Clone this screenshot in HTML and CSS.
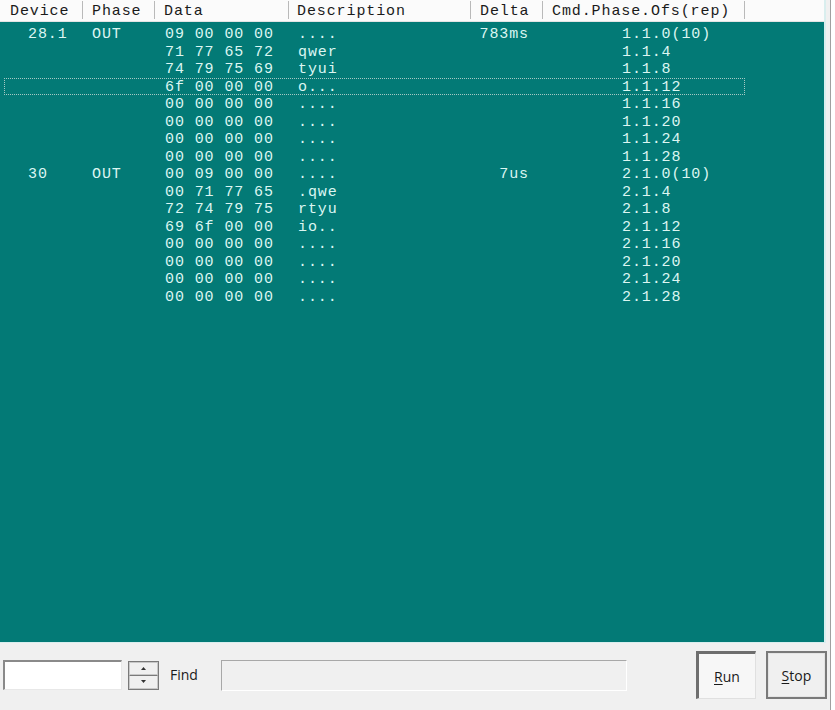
FILE: index.html
```html
<!DOCTYPE html>
<html>
<head>
<meta charset="utf-8">
<link rel="stylesheet" href="styles.css">
</head>
<body>
<div class="window">
  <div class="list">
    <div class="header">
      <div class="hcell c-dev">Device</div>
      <div class="hcell c-ph">Phase</div>
      <div class="hcell c-data">Data</div>
      <div class="hcell c-desc">Description</div>
      <div class="hcell c-delta">Delta</div>
      <div class="hcell c-cmd">Cmd.Phase.Ofs(rep)</div>
      <div class="hcell c-rest"></div>
    </div>
    <div class="rows">
      <div class="row"><span class="dev">28.1</span><span class="ph">OUT</span><span class="data">09 00 00 00</span><span class="desc">....</span><span class="delta">783ms</span><span class="cmd">1.1.0(10)</span></div>
      <div class="row"><span class="dev"></span><span class="ph"></span><span class="data">71 77 65 72</span><span class="desc">qwer</span><span class="delta"></span><span class="cmd">1.1.4</span></div>
      <div class="row"><span class="dev"></span><span class="ph"></span><span class="data">74 79 75 69</span><span class="desc">tyui</span><span class="delta"></span><span class="cmd">1.1.8</span></div>
      <div class="row focus"><span class="dev"></span><span class="ph"></span><span class="data">6f 00 00 00</span><span class="desc">o...</span><span class="delta"></span><span class="cmd">1.1.12</span></div>
      <div class="row"><span class="dev"></span><span class="ph"></span><span class="data">00 00 00 00</span><span class="desc">....</span><span class="delta"></span><span class="cmd">1.1.16</span></div>
      <div class="row"><span class="dev"></span><span class="ph"></span><span class="data">00 00 00 00</span><span class="desc">....</span><span class="delta"></span><span class="cmd">1.1.20</span></div>
      <div class="row"><span class="dev"></span><span class="ph"></span><span class="data">00 00 00 00</span><span class="desc">....</span><span class="delta"></span><span class="cmd">1.1.24</span></div>
      <div class="row"><span class="dev"></span><span class="ph"></span><span class="data">00 00 00 00</span><span class="desc">....</span><span class="delta"></span><span class="cmd">1.1.28</span></div>
      <div class="row"><span class="dev">30</span><span class="ph">OUT</span><span class="data">00 09 00 00</span><span class="desc">....</span><span class="delta">7us</span><span class="cmd">2.1.0(10)</span></div>
      <div class="row"><span class="dev"></span><span class="ph"></span><span class="data">00 71 77 65</span><span class="desc">.qwe</span><span class="delta"></span><span class="cmd">2.1.4</span></div>
      <div class="row"><span class="dev"></span><span class="ph"></span><span class="data">72 74 79 75</span><span class="desc">rtyu</span><span class="delta"></span><span class="cmd">2.1.8</span></div>
      <div class="row"><span class="dev"></span><span class="ph"></span><span class="data">69 6f 00 00</span><span class="desc">io..</span><span class="delta"></span><span class="cmd">2.1.12</span></div>
      <div class="row"><span class="dev"></span><span class="ph"></span><span class="data">00 00 00 00</span><span class="desc">....</span><span class="delta"></span><span class="cmd">2.1.16</span></div>
      <div class="row"><span class="dev"></span><span class="ph"></span><span class="data">00 00 00 00</span><span class="desc">....</span><span class="delta"></span><span class="cmd">2.1.20</span></div>
      <div class="row"><span class="dev"></span><span class="ph"></span><span class="data">00 00 00 00</span><span class="desc">....</span><span class="delta"></span><span class="cmd">2.1.24</span></div>
      <div class="row"><span class="dev"></span><span class="ph"></span><span class="data">00 00 00 00</span><span class="desc">....</span><span class="delta"></span><span class="cmd">2.1.28</span></div>
    </div>
  </div>
  <div class="toolbar">
    <div class="textbox"></div>
    <div class="spin">
      <div class="spin-btn"><svg width="5" height="3" viewBox="0 0 5 3"><path d="M2.5 0 L5 3 L0 3 Z" fill="#333"/></svg></div>
      <div class="spin-btn"><svg width="5" height="3" viewBox="0 0 5 3"><path d="M0 0 L5 0 L2.5 3 Z" fill="#333"/></svg></div>
    </div>
    <div class="find">Find</div>
    <div class="status"></div>
    <div class="btn btn-run"><u>R</u>un</div>
    <div class="btn btn-stop"><u>S</u>top</div>
  </div>
</div>
</body>
</html>
```

FILE: styles.css
```css
html, body {
  margin: 0;
  padding: 0;
  background: #ffffff;
}

.window {
  width: 830px;
  height: 710px;
  background: #f0f0f0;
  border-right: 1px solid #a0a0a0;
  display: flex;
  flex-direction: column;
}

.list {
  width: 826px;
  height: 643px;
  background: #037a76;
  border-right: 2px solid #d9eeee;
  border-bottom: 1px solid #d9eeee;
  box-sizing: border-box;
  font-family: "Liberation Mono", "DejaVu Sans Mono", monospace;
  font-size: 15px;
  letter-spacing: 0.9px;
}

.header {
  height: 22px;
  background: #fbfbfb;
  display: grid;
  grid-template-columns: 83px 72px 134px 182px 72px 202px 1fr;
  color: #1a1a1a;
  border-bottom: 1px solid #e4e4e4;
  box-sizing: border-box;
}

.hcell {
  padding-left: 9px;
  border-right: 1px solid #b9b9b9;
  white-space: nowrap;
  overflow: hidden;
  height: 18px;
  margin-top: 1px;
  line-height: 22px;
}

.hcell.c-dev { padding-left: 10px; }
.hcell.c-desc { padding-left: 8px; }
.hcell.c-rest { border-right: none; }

.rows {
  padding-top: 3px;
  padding-left: 4px;
  color: #dcf6f2;
}

.row {
  width: 741px;
  height: 17.5px;
  box-sizing: border-box;
  border: 1px dotted transparent;
  display: grid;
  grid-template-columns: 78px 72px 134px 182px 72px 201px;
  white-space: pre;
}

.row.focus {
  border-color: #a6c9c4;
}

.row span {
  display: block;
  line-height: 15.5px;
  padding-top: 1px;
}

.dev { padding-left: 23px; }
.ph { padding-left: 9px; }
.data { padding-left: 10px; }
.desc { padding-left: 9px; }
.delta { text-align: right; padding-right: 14px; }
.cmd { padding-left: 79px; }

.toolbar {
  flex: 1;
  display: flex;
  align-items: center;
  padding-left: 3px;
  padding-bottom: 3px;
  font-family: "Open Sans", "Noto Sans", "Liberation Sans", sans-serif;
  font-size: 14px;
  color: #1a1a1a;
}

.textbox {
  width: 119px;
  height: 30px;
  box-sizing: border-box;
  background: #ffffff;
  border-top: 2px solid #8a8a8a;
  border-left: 2px solid #8a8a8a;
  border-right: 1px solid #e8e8e8;
  border-bottom: 1px solid #e8e8e8;
}

.spin {
  margin-left: 6px;
  width: 31px;
  height: 29px;
  box-sizing: border-box;
  border: 1px solid #7a7a7a;
  display: flex;
  flex-direction: column;
  background: #f0f0f0;
}

.spin-btn {
  flex: 1;
  display: flex;
  align-items: center;
  justify-content: center;
  border: 1px solid #c8c8c8;
}

.spin-btn + .spin-btn {
  border-top: 1px solid #7a7a7a;
}

.find {
  margin-left: 11px;
  margin-top: -2px;
}

.status {
  margin-left: 23px;
  width: 406px;
  height: 31px;
  box-sizing: border-box;
  background: #f0f0f0;
  border-top: 1px solid #a8a8a8;
  border-left: 1px solid #a8a8a8;
  border-right: 1px solid #ffffff;
  border-bottom: 1px solid #ffffff;
}

.btn {
  height: 48px;
  box-sizing: border-box;
  display: flex;
  align-items: center;
  justify-content: center;
  background: #f0f0f0;
  padding-top: 1px;
}

.btn-run {
  margin-left: 69px;
  width: 60px;
  background: #f7f7f7;
  border-top: 3px solid #6e6e6e;
  border-left: 3px solid #6e6e6e;
  border-right: 1px solid #e0e0e0;
  border-bottom: 1px solid #e0e0e0;
}

.btn-stop {
  margin-left: 10px;
  width: 61px;
  border: 2px solid #7a7a7a;
  box-shadow: inset 0 0 0 1px #e4e4e4;
}

.btn u {
  text-decoration: underline;
  text-underline-offset: 2px;
}
```
